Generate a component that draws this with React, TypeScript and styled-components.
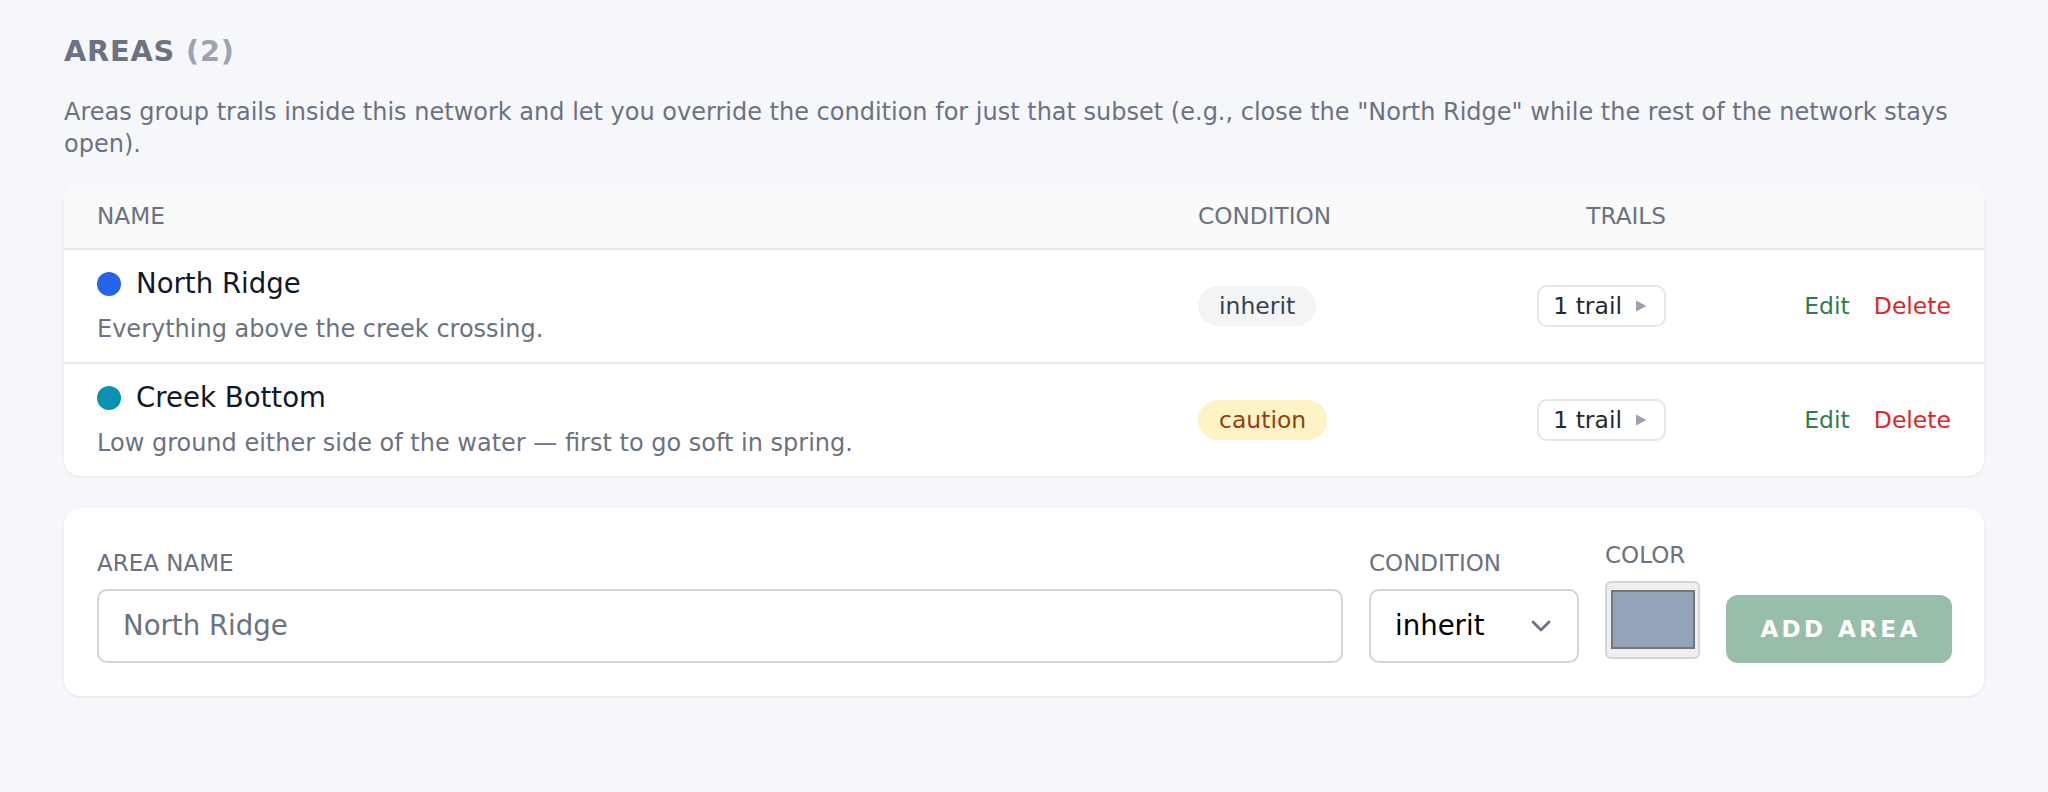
import React from "react";
import styled, { createGlobalStyle, css } from "styled-components";

const GlobalStyle = createGlobalStyle`
  html, body {
    margin: 0;
    padding: 0;
    background: #f6f7fa;
    font-family: "DejaVu Sans", "Noto Sans", sans-serif;
  }
  * { box-sizing: border-box; }
`;

const Page = styled.div`
  padding: 34px 64px 40px;
`;

const Heading = styled.h2`
  margin: 0;
  font-size: 28.8px;
  line-height: 34.56px;
  font-weight: 700;
  letter-spacing: 0.8px;
  color: #6b7280;
  text-transform: uppercase;
`;

const Count = styled.span`
  color: #9ca3af;
`;

const Description = styled.p`
  margin: 27px 0 24px;
  font-size: 24px;
  line-height: 32px;
  color: #6b7280;
`;

const Card = styled.div`
  background: #ffffff;
  border-radius: 16px;
  box-shadow: 0 1px 3px rgba(16, 24, 40, 0.06), 0 1px 2px rgba(16, 24, 40, 0.03);
  overflow: hidden;
`;

const gridColumns = css`
  display: grid;
  grid-template-columns: 1fr 266px 268px 285px;
  align-items: center;
`;

const HeaderRow = styled.div`
  ${gridColumns};
  height: 66px;
  background: #f9fafb;
  border-bottom: 2px solid #e5e7eb;
  font-size: 23.2px;
  color: #6b7280;
  text-transform: uppercase;
`;

const Cell = styled.div<{ $align?: "left" | "right" }>`
  padding: 0 33px;
  display: flex;
  justify-content: ${(p) => (p.$align === "right" ? "flex-end" : "flex-start")};
  align-items: center;
`;

const Row = styled.div<{ $first?: boolean }>`
  ${gridColumns};
  padding: 18.5px 0;
  border-top: ${(p) => (p.$first ? "none" : "2px solid #e5e7eb")};
`;

const NameBlock = styled.div`
  display: flex;
  flex-direction: column;
`;

const NameLine = styled.div`
  display: flex;
  align-items: center;
  gap: 15px;
  font-size: 27.6px;
  line-height: 32px;
  color: #111827;
`;

const Dot = styled.span<{ $color: string }>`
  width: 24px;
  height: 24px;
  border-radius: 50%;
  background: ${(p) => p.$color};
  flex: none;
`;

const AreaNote = styled.div`
  margin-top: 15px;
  font-size: 24px;
  line-height: 28px;
  color: #6b7280;
`;

const Pill = styled.span<{ $tone: "neutral" | "caution" }>`
  display: inline-flex;
  align-items: center;
  height: 40px;
  padding: 0 21px;
  border-radius: 999px;
  font-size: 23.5px;
  background: ${(p) => (p.$tone === "caution" ? "#fef3c7" : "#f3f4f6")};
  color: ${(p) => (p.$tone === "caution" ? "#92400e" : "#374151")};
`;

const TrailButton = styled.button`
  display: inline-flex;
  align-items: center;
  gap: 13px;
  height: 42px;
  padding: 0 17px 0 14px;
  border: 2px solid #e5e7eb;
  border-radius: 10px;
  background: #ffffff;
  font-family: inherit;
  font-size: 23.5px;
  color: #1f2937;
`;

const Actions = styled.div`
  display: flex;
  gap: 24px;
  font-size: 23.5px;
`;

const ActionLink = styled.span<{ $danger?: boolean }>`
  color: ${(p) => (p.$danger ? "#dc2626" : "#2f7d4f")};
  cursor: pointer;
`;

const FormCard = styled(Card)`
  margin-top: 32px;
  padding: 34px 32px 33px 33px;
  display: flex;
  align-items: flex-end;
  gap: 26px;
`;

const Field = styled.div<{ $grow?: boolean; $padBottom?: number }>`
  display: flex;
  flex-direction: column;
  flex: ${(p) => (p.$grow ? "1 1 auto" : "none")};
  padding-bottom: ${(p) => p.$padBottom ?? 0}px;
`;

const Label = styled.label`
  font-size: 23px;
  line-height: 27px;
  margin-bottom: 12px;
  color: #6b7280;
  text-transform: uppercase;
`;

const TextInput = styled.input`
  height: 74px;
  width: 100%;
  border: 2px solid #d1d5db;
  border-radius: 10px;
  padding: 0 24px;
  font-family: inherit;
  font-size: 27.6px;
  color: #111827;
  background: #ffffff;
  outline: none;
  &::placeholder {
    color: #6b7280;
  }
`;

const SelectBox = styled.div`
  width: 210px;
  height: 74px;
  border: 2px solid #d1d5db;
  border-radius: 10px;
  padding: 0 26px 0 24px;
  display: flex;
  align-items: center;
  justify-content: space-between;
  font-size: 27.6px;
  color: #000000;
  background: #ffffff;
`;

const Swatch = styled.div`
  width: 95px;
  height: 78px;
  border: 2px solid #d1d5db;
  border-radius: 6px;
  background: #efefef;
  display: flex;
  align-items: center;
  justify-content: center;
`;

const SwatchColor = styled.div<{ $color: string }>`
  width: 84px;
  height: 59px;
  border: 2px solid #767676;
  background: ${(p) => p.$color};
`;

const AddButton = styled.button`
  width: 226px;
  height: 68px;
  border: none;
  border-radius: 12px;
  background: #97bea8;
  color: #ffffff;
  font-family: inherit;
  font-size: 23px;
  font-weight: 700;
  letter-spacing: 3.4px;
  padding: 0 0 0 3px;
  text-transform: uppercase;
`;

const Caret = () => (
  <svg width="12" height="12" viewBox="0 0 12 12" aria-hidden="true">
    <polygon points="1,0.5 11.5,6 1,11.5" fill="#9ca3af" />
  </svg>
);

const Chevron = () => (
  <svg width="20" height="12" viewBox="0 0 20 12" aria-hidden="true">
    <polyline
      points="2,2 10,10 18,2"
      fill="none"
      stroke="#6b7280"
      strokeWidth="2.8"
      strokeLinecap="round"
      strokeLinejoin="round"
    />
  </svg>
);

type Area = {
  name: string;
  note: string;
  color: string;
  condition: string;
  tone: "neutral" | "caution";
  trails: number;
};

const areas: Area[] = [
  {
    name: "North Ridge",
    note: "Everything above the creek crossing.",
    color: "#2563eb",
    condition: "inherit",
    tone: "neutral",
    trails: 1,
  },
  {
    name: "Creek Bottom",
    note: "Low ground either side of the water — first to go soft in spring.",
    color: "#0891b2",
    condition: "caution",
    tone: "caution",
    trails: 1,
  },
];

export default function App() {
  return (
    <>
      <GlobalStyle />
      <Page>
        <Heading>
          Areas <Count>({areas.length})</Count>
        </Heading>
        <Description>
          Areas group trails inside this network and let you override the condition for just
          that subset (e.g., close the "North Ridge" while the rest of the network stays open).
        </Description>

        <Card>
          <HeaderRow>
            <Cell>Name</Cell>
            <Cell>Condition</Cell>
            <Cell $align="right">Trails</Cell>
            <Cell />
          </HeaderRow>
          {areas.map((a, i) => (
            <Row key={a.name} $first={i === 0}>
              <Cell>
                <NameBlock>
                  <NameLine>
                    <Dot $color={a.color} />
                    {a.name}
                  </NameLine>
                  <AreaNote>{a.note}</AreaNote>
                </NameBlock>
              </Cell>
              <Cell>
                <Pill $tone={a.tone}>{a.condition}</Pill>
              </Cell>
              <Cell $align="right">
                <TrailButton>
                  {a.trails} trail
                  <Caret />
                </TrailButton>
              </Cell>
              <Cell $align="right">
                <Actions>
                  <ActionLink>Edit</ActionLink>
                  <ActionLink $danger>Delete</ActionLink>
                </Actions>
              </Cell>
            </Row>
          ))}
        </Card>

        <FormCard>
          <Field $grow>
            <Label>Area name</Label>
            <TextInput placeholder="North Ridge" />
          </Field>
          <Field>
            <Label>Condition</Label>
            <SelectBox>
              inherit
              <Chevron />
            </SelectBox>
          </Field>
          <Field $padBottom={4}>
            <Label>Color</Label>
            <Swatch>
              <SwatchColor $color="#94a3b8" />
            </Swatch>
          </Field>
          <AddButton disabled>Add area</AddButton>
        </FormCard>
      </Page>
    </>
  );
}
